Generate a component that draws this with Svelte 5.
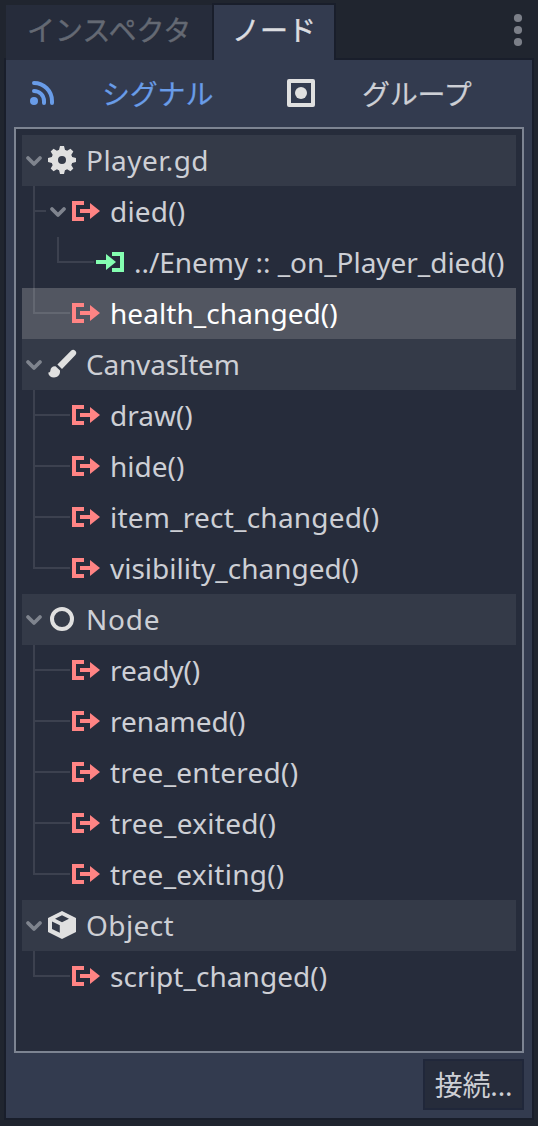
<script>
  const sig = (name, tracking = 0, extra = {}) => ({ kind: 'signal', depth: 1, name, tracking, ...extra });
  const cls = (kind, name, tracking = 0) => ({ kind, depth: 0, name, tracking, open: true });

  const rows = [
    cls('script', 'Player.gd', 0.45),
    sig('died()', 0.2, { open: true }),
    { kind: 'slot', depth: 2, name: '../Enemy :: _on_Player_died()', tracking: -0.04, last: true },
    sig('health_changed()', 0.07, { last: true, selected: true }),
    cls('canvas', 'CanvasItem', -0.2),
    sig('draw()'),
    sig('hide()'),
    sig('item_rect_changed()', 0.22),
    sig('visibility_changed()', 0, { last: true }),
    cls('node', 'Node', 0.8),
    sig('ready()', -0.1),
    sig('renamed()', -0.05),
    sig('tree_entered()', 0.24),
    sig('tree_exited()', 0.3),
    sig('tree_exiting()', 0.24, { last: true }),
    cls('object', 'Object', 0.4),
    sig('script_changed()', 0.07, { last: true })
  ];

  const guideWidth = (r) => (r.depth === 2 ? 72 : r.open ? 24 : 48);
  const teeth = [0, 45, 90, 135, 180, 225, 270, 315];
</script>

{#snippet icon(kind)}
  <svg class="icon" viewBox="0 0 16 16" width="32" height="32">
    {#if kind === 'script'}
      <circle cx="8" cy="8" r="3.65" fill="none" stroke="#e0e0e0" stroke-width="3.3" />
      {#each teeth as a}
        <path fill="#e0e0e0" d="M7 1h2l.6 2.4v.8H6.4v-.8z" transform="rotate({a} 8 8)" />
      {/each}
    {:else if kind === 'signal'}
      <path fill="#ff8484" d="M1 3h6v2H3v6h4v2H1zM5 7h5V4l5 4-5 4V9H5z" />
    {:else if kind === 'slot'}
      <path fill="#84ffb1" d="M9 3h6v10H9v-2h4V5H9zM1 7h5V4l5 4-5 4V9H1z" />
    {:else if kind === 'canvas'}
      <path fill="#e0e0e0" d="M14.6 1.4a1.45 1.45 0 0 0-2.1 0L5.7 8.3l2.3 2.2 6.6-6.9a1.55 1.55 0 0 0 0-2.2zM4.9 9.2c-1.6-.2-2.6.7-2.7 2-.1.8-.4 1-1.1 1 .2 1.6 1.3 2.5 2.9 2.5 1.8 0 3-1.1 3-2.8v-.6z" />
    {:else if kind === 'node'}
      <circle cx="8" cy="8" r="5" fill="none" stroke="#e0e0e0" stroke-width="2" />
    {:else}
      <path fill="#e0e0e0" fill-rule="evenodd" d="M8 1 1 4.5v7L8 15l7-3.5v-7zM8 3.1l3.5 1.75L8 6.6 4.5 4.85zM3 6.2l3.9 1.95v3.75L3 9.95z" />
    {/if}
  </svg>
{/snippet}

<div class="dock">
  <header class="tabs">
    <div class="tab inactive">インスペクタ</div>
    <div class="tab active">ノード</div>
    <svg class="more" viewBox="0 0 10 34" width="10" height="34">
      <circle cx="5" cy="5" r="4.1" /><circle cx="5" cy="17" r="4.1" /><circle cx="5" cy="29" r="4.1" />
    </svg>
  </header>

  <main class="panel">
    <nav class="modes">
      <div class="mode signals">
        <svg class="icon" viewBox="0 0 16 16" width="32" height="32">
          <circle cx="3" cy="12" r="2" fill="#699ce8" />
          <path d="M3 7a5 5 0 0 1 5 5v1M3 3a9 9 0 0 1 9 9v1" fill="none" stroke="#699ce8" stroke-width="2" stroke-linecap="round" />
        </svg>
        <span>シグナル</span>
      </div>
      <div class="mode groups">
        <svg class="icon" viewBox="0 0 16 16" width="32" height="32">
          <rect x="2" y="2" width="12" height="12" fill="none" stroke="#e0e0e0" stroke-width="2" stroke-linejoin="round" />
          <circle cx="8" cy="8" r="3" fill="#e0e0e0" />
        </svg>
        <span>グループ</span>
      </div>
    </nav>

    <section class="tree">
      {#each rows as r}
        <div class="row" class:category={r.depth === 0} class:selected={r.selected}>
          {#if r.depth > 0}
            <svg class="guide" width={guideWidth(r)} height="51">
              {#if r.depth === 2}
                <path d="M12 0V51M36 0V26M37 25H72" />
              {:else}
                <path d="M12 0V{r.last ? 26 : 51}M13 25H{guideWidth(r)}" />
              {/if}
            </svg>
          {/if}
          {#if r.open}
            <svg class="chevron" width="24" height="24" viewBox="0 0 24 24">
              <path d="M6 9l6 6 6-6" />
            </svg>
          {/if}
          {@render icon(r.kind)}
          <span class="label" style="letter-spacing: {r.tracking}px">{r.name}</span>
        </div>
      {/each}
    </section>

    <footer>
      <button>接続...</button>
    </footer>
  </main>
</div>

<style>
  :global(body) {
    background: #20252f;
  }
  .dock {
    box-sizing: border-box;
    width: 538px;
    height: 1126px;
    padding: 3px 4px 6px;
    display: flex;
    flex-direction: column;
    color: #cdcfd5;
    font: 28px/38px 'Noto Sans', 'Noto Sans CJK JP', sans-serif;
  }
  .tabs {
    display: flex;
    height: 57px;
    flex: none;
    margin-bottom: -2px;
    z-index: 1;
  }
  .tab {
    box-sizing: border-box;
    white-space: nowrap;
    line-height: 50px;
    -webkit-text-stroke: 0.4px currentColor;
  }
  .inactive {
    width: 206px;
    height: 55px;
    margin: 2px 0 0 2px;
    padding-left: 21px;
    background: #262c3b;
    color: #646973;
  }
  .active {
    width: 124px;
    height: 57px;
    padding-left: 18px;
    border: 2px solid #191e2b;
    border-bottom: 0;
    background: #333b4f;
    color: #dcdde0;
  }
  .more {
    margin: 10px 11px 0 auto;
    fill: #7b7f88;
  }
  .panel {
    box-sizing: border-box;
    flex: 1;
    display: flex;
    flex-direction: column;
    padding: 0 8px 8px;
    border: 2px solid #191e2b;
    background: #333b4f;
  }
  .modes {
    display: flex;
    height: 67px;
    align-items: center;
  }
  .mode {
    display: flex;
    align-items: center;
    white-space: nowrap;
    -webkit-text-stroke: 0.2px currentColor;
  }
  .signals {
    box-sizing: border-box;
    width: 261px;
    padding-left: 14px;
    gap: 42px;
    color: #699ce8;
    letter-spacing: -0.2px;
  }
  .groups {
    padding-left: 10px;
    gap: 45px;
    letter-spacing: -0.2px;
  }
  .icon {
    flex: none;
    margin-bottom: 1px;
  }
  .tree {
    box-sizing: border-box;
    height: 926px;
    padding: 6px;
    border: 2px solid #7d8492;
    background: #262c3b;
  }
  .row {
    display: flex;
    align-items: center;
    height: 51px;
    white-space: nowrap;
  }
  .category {
    background: #343a48;
  }
  .selected {
    background: #525661;
    color: #fff;
  }
  .guide {
    flex: none;
    fill: none;
    stroke: rgba(255, 255, 255, 0.1);
    stroke-width: 2;
  }
  .chevron {
    flex: none;
    margin-top: 1px;
    fill: none;
    stroke: #7f848e;
    stroke-width: 3.8;
    stroke-linecap: round;
    stroke-linejoin: round;
  }
  .label {
    margin: 0 0 1px 8px;
  }
  footer {
    display: flex;
    justify-content: flex-end;
    padding-top: 6px;
  }
  button {
    box-sizing: border-box;
    width: 101px;
    height: 51px;
    padding: 0;
    border: 2px solid #20273a;
    background: #262c3b;
    color: inherit;
    font: inherit;
    letter-spacing: -0.2px;
  }
</style>
